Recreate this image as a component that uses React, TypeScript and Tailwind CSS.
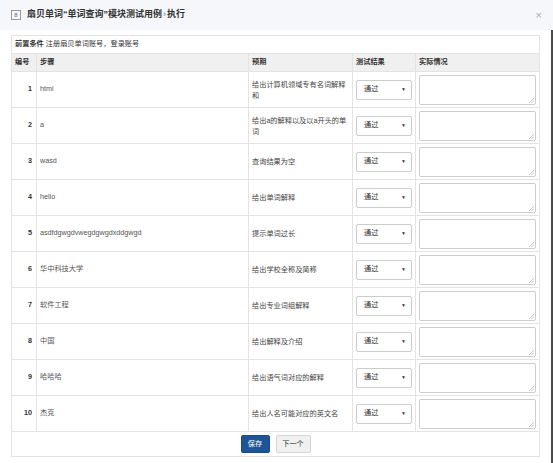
const rows = [
  { step: "html", expect: "给出计算机领域专有名词解释和" },
  { step: "a", expect: "给出a的解释以及以a开头的单词" },
  { step: "wasd", expect: "查询结果为空" },
  { step: "hello", expect: "给出单词解释" },
  { step: "asdfdgwgdvwegdgwgdxddgwgd", expect: "提示单词过长" },
  { step: "华中科技大学", expect: "给出学校全称及简称" },
  { step: "软件工程", expect: "给出专业词组解释" },
  { step: "中国", expect: "给出解释及介绍" },
  { step: "哈哈哈", expect: "给出语气词对应的解释" },
  { step: "杰克", expect: "给出人名可能对应的英文名" },
];

const font = {
  fontFamily: '"Liberation Sans", Arial, "Noto Sans CJK SC", sans-serif',
};

function ResultSelect() {
  return (
    <div className="flex h-[20px] w-[56px] items-center justify-between rounded-[2px] border border-[#cccccc] bg-white pl-[7px] pr-[5px] text-[7.2px] text-[#333]">
      <span>通过</span>
      <span className="text-[5px] leading-none">▼</span>
    </div>
  );
}

function NoteBox() {
  return (
    <div className="relative h-[30px] w-[117px] rounded-[2px] border border-[#cccccc] bg-white">
      <svg
        className="absolute bottom-[1px] right-[1px]"
        width="5"
        height="5"
        viewBox="0 0 5 5"
      >
        <path d="M5 0L0 5M5 2.5L2.5 5" stroke="#aaa" strokeWidth="0.7" />
      </svg>
    </div>
  );
}

export default function App() {
  return (
    <div
      className="flex h-[463px] w-[553px] flex-col bg-white text-[#333]"
      style={font}
    >
      {/* modal header */}
      <div className="flex h-[30px] shrink-0 items-center bg-[#f5f7fb] pl-[11px] pr-[11px]">
        <span className="flex h-[10px] w-[10px] items-center justify-center border border-[#999] text-[6px] leading-none text-[#666]">
          8
        </span>
        <span className="ml-[6px] text-[9px] font-semibold text-[#333]">
          扇贝单词“单词查询”模块测试用例
          <span className="mx-[1px] font-normal text-[#666]">›</span>
          执行
        </span>
        <span className="ml-auto text-[11px] leading-none text-[#aaa]">×</span>
      </div>

      <div className="flex flex-1">
        <div className="flex-1 pl-[11px] pt-[5px]">
          <table className="w-[528px] table-fixed border-collapse text-[7.2px]">
            <colgroup>
              <col className="w-[25px]" />
              <col className="w-[212px]" />
              <col className="w-[104px]" />
              <col className="w-[63px]" />
              <col className="w-[124px]" />
            </colgroup>
            <tbody>
              <tr className="h-[18px]">
                <td
                  colSpan={5}
                  className="border border-[#e3e3e3] px-[3px] align-middle"
                >
                  <span className="font-bold">前置条件</span> 注册扇贝单词账号，登录账号
                </td>
              </tr>
              <tr className="h-[18px] bg-[#f0f0f0] font-bold">
                <td className="border border-[#e3e3e3] px-[3px]">编号</td>
                <td className="border border-[#e3e3e3] px-[3px]">步骤</td>
                <td className="border border-[#e3e3e3] px-[3px]">预期</td>
                <td className="border border-[#e3e3e3] px-[3px]">测试结果</td>
                <td className="border border-[#e3e3e3] px-[3px]">实际情况</td>
              </tr>
              {rows.map((r, i) => (
                <tr key={i} className="h-[36px]">
                  <td className="border border-[#e3e3e3] pr-[4px] text-right font-bold">
                    {i + 1}
                  </td>
                  <td className="border border-[#e3e3e3] px-[3px] text-[#555]">
                    {r.step}
                  </td>
                  <td className="border border-[#e3e3e3] pl-[3px] pr-[1px] leading-[11px] text-[#444]">
                    {r.expect}
                  </td>
                  <td className="border border-[#e3e3e3] px-[3px]">
                    <ResultSelect />
                  </td>
                  <td className="border border-[#e3e3e3] px-[3px]">
                    <NoteBox />
                  </td>
                </tr>
              ))}
              <tr className="h-[25px]">
                <td colSpan={5} className="border border-[#e3e3e3]">
                  <div className="flex items-center justify-center gap-[6px]">
                    <button className="h-[18px] w-[29px] rounded-[2px] border border-[#1b4a86] bg-[#1f5596] text-[7.2px] text-white">
                      保存
                    </button>
                    <button className="h-[18px] w-[35px] rounded-[2px] border border-[#d5d5d5] bg-[#f0f0f0] text-[7.2px] text-[#333]">
                      下一个
                    </button>
                  </div>
                </td>
              </tr>
            </tbody>
          </table>
        </div>
        <div className="w-[2px] bg-[#4a4a4a]" />
      </div>
    </div>
  );
}
